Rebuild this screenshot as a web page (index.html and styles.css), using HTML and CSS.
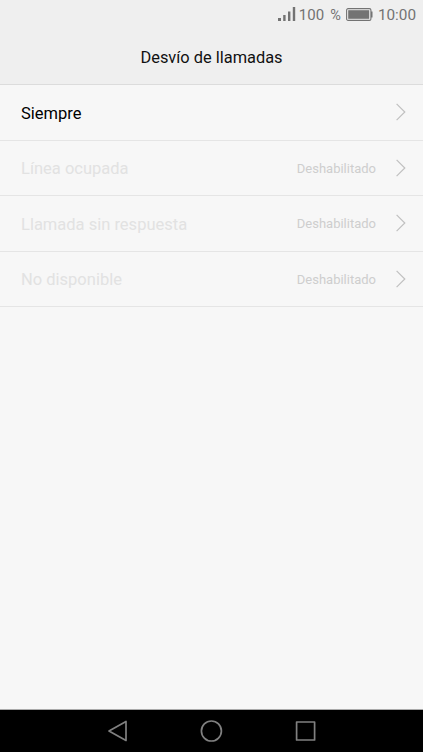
FILE: index.html
```html
<!DOCTYPE html>
<html lang="es">
<head>
    <meta charset="UTF-8">
    <meta name="viewport" content="width=device-width, initial-scale=1.0">
    <title>Desvío de llamadas</title>
    <link rel="stylesheet" href="styles.css">
</head>
<body>
    <header class="header">
        <div class="status-bar">
            <svg class="signal" width="18" height="15" viewBox="0 0 18 15">
                <path d="M0 11h3v3h-3zM5.2 8h2.4v6h-2.4zM10 4.500h2.400v9.500h-2.400zM14.800 0h2.400v14h-2.400z"/>
            </svg>
            <span class="percent">100 <span class="sign">%</span></span>
            <svg class="battery" width="27" height="13" viewBox="0 0 27 13">
                <rect class="shell" x="0.600" y="0.600" width="24.300" height="11.800" rx="1.500"/>
                <rect x="2.200" y="2.200" width="21" height="8.600"/>
                <path d="M25 3.500h1.500v6h-1.500z"/>
            </svg>
            <span class="time">10:00</span>
        </div>
        <h1>Desvío de llamadas</h1>
    </header>

    <ul class="list">
        <li class="item">
            <span class="label">Siempre</span>
            <svg class="arrow" width="11" height="18" viewBox="0 0 11 18"><path d="M0.600 0.800L8.800 9L0.600 17.200"/></svg>
        </li>
        <li class="item disabled">
            <span class="label">Línea ocupada</span>
            <span class="state">Deshabilitado</span>
            <svg class="arrow" width="11" height="18" viewBox="0 0 11 18"><path d="M0.600 0.800L8.800 9L0.600 17.200"/></svg>
        </li>
        <li class="item disabled">
            <span class="label">Llamada sin respuesta</span>
            <span class="state">Deshabilitado</span>
            <svg class="arrow" width="11" height="18" viewBox="0 0 11 18"><path d="M0.600 0.800L8.800 9L0.600 17.200"/></svg>
        </li>
        <li class="item disabled">
            <span class="label">No disponible</span>
            <span class="state">Deshabilitado</span>
            <svg class="arrow" width="11" height="18" viewBox="0 0 11 18"><path d="M0.600 0.800L8.800 9L0.600 17.200"/></svg>
        </li>
    </ul>

    <nav class="nav-bar">
        <svg width="22" height="24" viewBox="0 0 22 24"><path d="M2 12L19 2.500V21.500Z"/></svg>
        <svg width="24" height="24" viewBox="0 0 24 24"><circle cx="12.400" cy="12" r="10"/></svg>
        <svg width="22" height="24" viewBox="0 0 22 24"><rect x="2.600" y="3" width="18" height="18"/></svg>
    </nav>
</body>
</html>
```

FILE: styles.css
```css
:root {
    --header-bg: #efefef;
    --page-bg: #f7f7f7;
    --status: #737373;
    --line: #e5e5e5;
}

* {
    box-sizing: border-box;
}

body {
    margin: 0;
    height: 100vh;
    display: flex;
    flex-direction: column;
    background-color: var(--page-bg);
    font-family: Roboto, sans-serif;
    overflow: hidden;
}

.header {
    height: 85px;
    background-color: var(--header-bg);
    border-bottom: 1px solid #dcdcdc;
}

.status-bar {
    height: 29px;
    padding-right: 7px;
    display: flex;
    justify-content: flex-end;
    align-items: center;
    color: var(--status);
    font-size: 15.3px;
}

.status-bar svg {
    fill: var(--status);
}

.signal {
    margin-right: 3px;
}

.percent {
    font-size: 15px;
}

.sign {
    margin-left: 2.5px;
    font-size: 14.5px;
}

.battery {
    margin: 0 5px;
}

.battery .shell {
    fill: none;
    stroke: var(--status);
    stroke-width: 1.1;
}

h1 {
    margin: 0;
    padding-top: 1px;
    line-height: 56px;
    text-align: center;
    font-size: 16.4px;
    font-weight: 400;
    color: #111;
}

.list {
    flex: 1;
    margin: 0;
    padding: 0;
    list-style: none;
}

.item {
    height: 55.5px;
    padding: 0 16px 0 21px;
    display: flex;
    align-items: center;
    border-bottom: 1px solid var(--line);
}

.label {
    flex: 1;
    padding-top: 2px;
    font-size: 16.5px;
    color: #000;
}

.disabled .label {
    color: #e2e2e2;
}

.state {
    margin-right: 20px;
    padding-top: 1px;
    font-size: 13px;
    color: #cecece;
}

.arrow {
    fill: none;
    stroke: #c0c0c0;
    stroke-width: 1.2;
}

.nav-bar {
    height: 43px;
    padding: 0 107px 0 106.5px;
    display: flex;
    justify-content: space-between;
    align-items: center;
    background-color: #000;
    border-top: 1px solid #aaa;
}

.nav-bar svg {
    fill: none;
    stroke: #808080;
    stroke-width: 1.7;
    stroke-linejoin: round;
}
```
